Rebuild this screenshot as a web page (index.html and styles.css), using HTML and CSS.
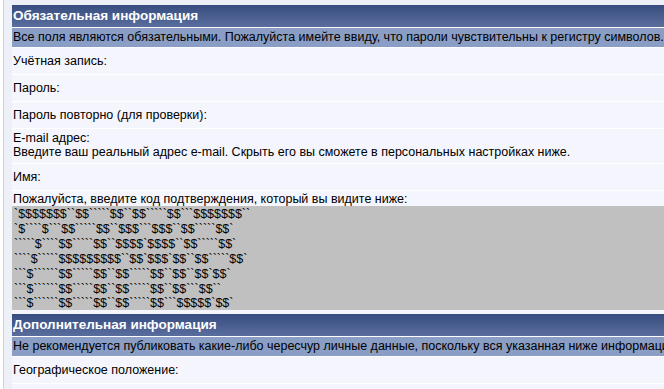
FILE: index.html
```html
<!DOCTYPE html>
<html lang="ru">
<head>
  <meta charset="UTF-8">
  <title>Регистрация</title>
  <link rel="stylesheet" href="styles.css">
</head>
<body>

<div class="page">

  <!-- Обязательная информация -->
  <div class="section">
    <div class="cat">Обязательная информация</div>
    <div class="note">Все поля являются обязательными. Пожалуйста имейте ввиду, что пароли чувствительны к регистру символов.</div>
    <div class="row">Учётная запись:</div>
    <div class="row">Пароль:</div>
    <div class="row">Пароль повторно (для проверки):</div>
    <div class="row row-tall">E-mail адрес:<br>Введите ваш реальный адрес e-mail. Скрыть его вы сможете в персональных настройках ниже.</div>
    <div class="row">Имя:</div>
    <div class="row row-captcha">
      <div class="captcha-label">Пожалуйста, введите код подтверждения, который вы видите ниже:</div>
<pre class="captcha">`$$$$$$$``$$`````$$``$$`````$$```$$$$$$$``
`$````$```$$`````$$``$$$```$$$``$$`````$$`
`````$````$$`````$$``$$$$`$$$$``$$`````$$`
````$`````$$$$$$$$$``$$`$$$`$$``$$`````$$`
```$``````$$`````$$``$$`````$$``$$``$$`$$`
```$``````$$`````$$``$$`````$$``$$```$$``
```$``````$$`````$$``$$`````$$```$$$$$`$$`</pre>
    </div>
  </div>

  <!-- Дополнительная информация -->
  <div class="section">
    <div class="cat">Дополнительная информация</div>
    <div class="note">Не рекомендуется публиковать какие-либо чересчур личные данные, поскольку вся указанная ниже информация будет доступна для просмотра всем посетителям.</div>
    <div class="row">Географическое положение:</div>
    <div class="row"></div>
  </div>

</div>

</body>
</html>
```

FILE: styles.css
```css
html {
  background: #ffffff;
  overflow: hidden;
}

body {
  margin: 0 0 0 3px;
  padding: 5px 0 0 8px;
  border-left: 1px solid #cfd0e6;
  background: #eef0f8;
  font-family: "Liberation Sans", Arial, sans-serif;
  font-size: 12.5px;
  color: #000;
  overflow: hidden;
  height: 389px;
  box-sizing: border-box;
}

.page {
  background: #f4f5fd;
  overflow: hidden;
}

.section {
  display: flex;
  flex-direction: column;
  gap: 1px;
  background: #ffffff;
}

.section + .section {
  margin-top: 4px;
}

.cat {
  height: 22px;
  line-height: 22px;
  padding-left: 1px;
  background: linear-gradient(#374d7f, #5a6e9e);
  color: #ffffff;
  font-weight: bold;
  font-size: 13.5px;
  white-space: nowrap;
  overflow: hidden;
}

.note {
  height: 19px;
  line-height: 19px;
  padding-left: 1px;
  background: #8a9dc4;
  white-space: nowrap;
  overflow: hidden;
}

.row {
  min-height: 26px;
  line-height: 26px;
  padding-left: 1px;
  background: #f4f5fd;
  white-space: nowrap;
  overflow: hidden;
}

.row-tall {
  height: 34px;
  line-height: 14px;
  padding-top: 2px;
  box-sizing: border-box;
}

.row-captcha {
  line-height: 14px;
  padding: 1px 0 0 0;
}

.captcha-label {
  padding-left: 1px;
  height: 14px;
}

.captcha {
  margin: 0;
  padding: 1px 0 0 2px;
  height: 104px;
  box-sizing: border-box;
  background: #c0c0c0;
  font-family: "Liberation Sans", Arial, sans-serif;
  font-size: 12.5px;
  line-height: 14.9px;
}
```
